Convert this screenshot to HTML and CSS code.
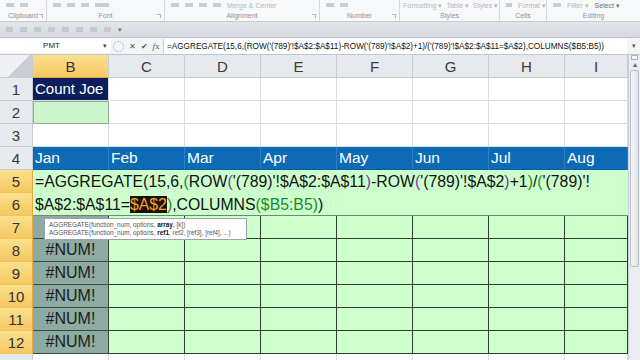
FILE: index.html
```html
<!DOCTYPE html>
<html lang="en">
<head>
  <meta charset="UTF-8" />
  <title>AGGREGATE - Count Joe</title>
  <link rel="stylesheet" href="styles.css">
</head>
<body>
  <div class="ribbon">
    <div class="group clip">
      <div class="icons"><span class="ic"></span><span class="ic"></span></div>
      <div class="label">Clipboard <i class="launch"></i></div>
    </div>
    <div class="group font">
      <div class="icons"><span class="ic"></span><span class="ic"></span><span class="ic"></span><span class="ic wide"></span></div>
      <div class="label">Font <i class="launch"></i></div>
    </div>
    <div class="group align">
      <div class="icons"><span class="ic"></span><span class="ic"></span><span class="ic"></span><span class="ic"></span><span class="top-text">Merge &amp; Center</span></div>
      <div class="label">Alignment <i class="launch"></i></div>
    </div>
    <div class="group number">
      <div class="icons"><span class="ic"></span><span class="ic"></span></div>
      <div class="label">Number <i class="launch"></i></div>
    </div>
    <div class="group styles">
      <div class="icons tight"><span class="top-text">Formatting ▾</span><span class="top-text">Table ▾</span><span class="top-text">Styles ▾</span></div>
      <div class="label">Styles</div>
    </div>
    <div class="group cells">
      <div class="icons"><span class="ic"></span><span class="top-text">Format ▾</span></div>
      <div class="label">Cells</div>
    </div>
    <div class="group editing">
      <div class="icons"><span class="ic"></span><span class="top-text">Filter ▾</span><span class="top-text dark">Select ▾</span></div>
      <div class="label">Editing</div>
    </div>
  </div>

  <div class="qat">
    <span class="qi"></span><span class="qi"></span><span class="qi"></span><span class="qi"></span><span class="qi"></span><span class="qi"></span><span class="qi"></span><span class="qi"></span>
    <span class="qarrow">▾</span>
  </div>

  <div class="formula-bar">
    <div class="name-box">PMT</div>
    <span class="nb-drop">▾</span>
    <span class="fb-grip"></span>
    <span class="fb-btn">✕</span>
    <span class="fb-btn">✔</span>
    <span class="fb-btn fx"><i>f</i>x</span>
    <div class="formula">=AGGREGATE(15,6,(ROW('(789)'!$A$2:$A$11)-ROW('(789)'!$A$2)+1)/('(789)'!$A$2:$A$11=$A$2),COLUMNS($B5:B5))</div>
    <span class="fb-expand">▾</span>
  </div>

  <div class="workspace">
    <div class="sheet">
      <div class="hd corner"></div>
      <div class="hd col sel">B</div>
      <div class="hd col">C</div>
      <div class="hd col">D</div>
      <div class="hd col">E</div>
      <div class="hd col">F</div>
      <div class="hd col">G</div>
      <div class="hd col">H</div>
      <div class="hd col">I</div>

      <div class="hd row">1</div>
      <div class="c navy">Count Joe</div>
      <div class="c"></div><div class="c"></div><div class="c"></div><div class="c"></div><div class="c"></div><div class="c"></div><div class="c"></div>

      <div class="hd row">2</div>
      <div class="c input"></div>
      <div class="c"></div><div class="c"></div><div class="c"></div><div class="c"></div><div class="c"></div><div class="c"></div><div class="c"></div>

      <div class="hd row">3</div>
      <div class="c"></div><div class="c"></div><div class="c"></div><div class="c"></div><div class="c"></div><div class="c"></div><div class="c"></div><div class="c"></div>

      <div class="hd row">4</div>
      <div class="c month">Jan</div>
      <div class="c month">Feb</div>
      <div class="c month">Mar</div>
      <div class="c month">Apr</div>
      <div class="c month">May</div>
      <div class="c month">Jun</div>
      <div class="c month">Jul</div>
      <div class="c month">Aug</div>

      <div class="hd row sel">5</div>
      <div class="editor">=AGGREGATE(15,6,<span class="p2">(</span>ROW<span class="p3">(</span>'(789)'!$A$2:$A$11<span class="p3">)</span>-ROW<span class="p3">(</span>'(789)'!$A$2<span class="p3">)</span>+1<span class="p2">)</span>/<span class="p2">(</span>'(789)'!<br>$A$2:$A$11=<span class="ref">$A$2</span><span class="p2">)</span>,COLUMNS<span class="p2">(</span><span class="p2">$B5:B5</span><span class="p2">)</span>)</div>
      <div class="hd row sel">6</div>

      <div class="hd row sel">7</div>
      <div class="c err"></div>
      <div class="c g"></div><div class="c g"></div><div class="c g"></div><div class="c g"></div><div class="c g"></div><div class="c g"></div><div class="c g"></div>

      <div class="hd row sel">8</div>
      <div class="c err">#NUM!</div>
      <div class="c g"></div><div class="c g"></div><div class="c g"></div><div class="c g"></div><div class="c g"></div><div class="c g"></div><div class="c g"></div>

      <div class="hd row sel">9</div>
      <div class="c err">#NUM!</div>
      <div class="c g"></div><div class="c g"></div><div class="c g"></div><div class="c g"></div><div class="c g"></div><div class="c g"></div><div class="c g"></div>

      <div class="hd row sel">10</div>
      <div class="c err">#NUM!</div>
      <div class="c g"></div><div class="c g"></div><div class="c g"></div><div class="c g"></div><div class="c g"></div><div class="c g"></div><div class="c g"></div>

      <div class="hd row sel">11</div>
      <div class="c err">#NUM!</div>
      <div class="c g"></div><div class="c g"></div><div class="c g"></div><div class="c g"></div><div class="c g"></div><div class="c g"></div><div class="c g"></div>

      <div class="hd row sel">12</div>
      <div class="c err">#NUM!</div>
      <div class="c g"></div><div class="c g"></div><div class="c g"></div><div class="c g"></div><div class="c g"></div><div class="c g"></div><div class="c g"></div>

      <div class="hd row">13</div>
      <div class="c"></div><div class="c"></div><div class="c"></div><div class="c"></div><div class="c"></div><div class="c"></div><div class="c"></div><div class="c"></div>

      <div class="tip">
        AGGREGATE(function_num, options, <b>array</b>, [k])<br>
        AGGREGATE(function_num, options, <b>ref1</b>, ref2, [ref3], [ref4], ...)
      </div>
    </div>

    <div class="vscroll">
      <div class="split"></div>
      <div class="arrow">▴</div>
      <div class="thumb"></div>
    </div>
  </div>
</body>
</html>
```

FILE: styles.css
```css
body {
  margin: 0;
  width: 640px;
  height: 360px;
  overflow: hidden;
  font-family: 'Liberation Sans', Arial, sans-serif;
  background-color: #ffffff;
}

/* ribbon */
.ribbon {
  height: 21px;
  display: flex;
  background-color: #f7f8fa;
  border-bottom: 1px solid #c6ccd4;
}

.group {
  display: flex;
  flex-direction: column;
  justify-content: space-between;
  border-right: 1px solid #d6dae0;
}

.group .icons {
  height: 10px;
  display: flex;
  align-items: center;
  gap: 6px;
  padding-left: 6px;
  overflow: hidden;
}

.group .icons.tight {
  gap: 4px;
  padding-left: 3px;
}

.ic {
  width: 8px;
  height: 4px;
  background-color: #c9ced6;
}

.ic.wide {
  width: 14px;
}

.top-text {
  font-size: 7px;
  line-height: 9px;
  color: #b3b9c2;
  white-space: nowrap;
}

.top-text.dark {
  color: #6c7582;
}

.group .label {
  position: relative;
  height: 10px;
  font-size: 7px;
  line-height: 9px;
  color: #8a94a2;
  text-align: center;
}

.launch {
  position: absolute;
  right: 3px;
  top: 3px;
  width: 3px;
  height: 3px;
  border-top: 1px solid #b0b7c1;
  border-right: 1px solid #b0b7c1;
}

.clip { width: 46px; }
.font { width: 117px; }
.align { width: 154px; }
.number { width: 79px; }
.styles { width: 99px; }
.cells { width: 46px; }
.editing { flex: 1; border-right: none; }

/* quick access */
.qat {
  height: 15px;
  display: flex;
  align-items: center;
  gap: 7px;
  padding-left: 6px;
  background: linear-gradient(#e2e6eb, #d5dae1);
  border-bottom: 1px solid #bcc3cc;
}

.qi {
  width: 7px;
  height: 5px;
  background-color: #c3c9d1;
}

.qarrow {
  font-size: 7px;
  color: #6d7784;
}

/* formula bar */
.formula-bar {
  height: 16px;
  display: flex;
  align-items: center;
  background-color: #f2f4f7;
  border-bottom: 1px solid #bfc6cf;
}

.name-box {
  width: 103px;
  height: 14px;
  background-color: #ffffff;
  font-size: 8px;
  line-height: 14px;
  text-align: center;
  color: #222;
}

.nb-drop {
  width: 8px;
  font-size: 7px;
  color: #444;
  background-color: #ffffff;
  height: 14px;
  line-height: 14px;
}

.fb-grip {
  width: 9px;
  height: 9px;
  margin: 0 2px 0 2px;
  border: 1px dotted #aab2bd;
  border-radius: 50%;
}

.fb-btn {
  width: 12px;
  font-size: 8px;
  color: #4b5563;
  text-align: center;
}

.fb-btn.fx {
  font-family: 'Liberation Serif', serif;
  font-size: 9px;
  color: #6a5a3a;
  margin-right: 1px;
}

.formula {
  flex: 1;
  height: 15px;
  background-color: #ffffff;
  border-left: 1px solid #c6ccd4;
  font-size: 8.2px;
  line-height: 15px;
  padding-left: 3px;
  color: #111;
  white-space: nowrap;
  overflow: hidden;
}

.fb-expand {
  width: 13px;
  font-size: 7px;
  color: #555;
  text-align: center;
}

/* sheet */
.workspace {
  display: flex;
}

.sheet {
  position: relative;
  display: grid;
  grid-template-columns: 33px repeat(7, 76px) 63px;
  grid-auto-rows: 23px;
}

.hd {
  background-color: #e6e9ee;
  border-right: 1px solid #c7cdd5;
  border-bottom: 1px solid #c7cdd5;
  color: #3b3b3b;
  font-size: 15px;
  display: flex;
  align-items: center;
  justify-content: center;
}

.hd.corner {
  background: linear-gradient(135deg, #eef0f3 55%, #c9ced5 56%);
}

.hd.sel {
  background: linear-gradient(#fbe08d, #f5c862);
  border-bottom-color: #e2a93a;
  color: #333;
}

.hd.row.sel {
  border-right: 1px solid #e2a93a;
  border-bottom-color: #f2c15c;
}

.c {
  border-right: 1px solid #dadde1;
  border-bottom: 1px solid #dadde1;
  font-size: 15px;
  line-height: 22px;
  padding-left: 2px;
  white-space: nowrap;
  overflow: hidden;
}

.navy {
  background-color: #0c1f5c;
  color: #ffffff;
}

.input {
  background-color: #ccf5cc;
  border: 1px solid #8fb08f;
}

.month {
  background-color: #0d6bb5;
  color: #ffffff;
  font-size: 15.5px;
  border-right-color: #2c7fc0;
  border-bottom-color: #0a5d9e;
}

.editor {
  grid-column: 2 / 10;
  grid-row: 6 / 8;
  background-color: #ccffcc;
  border-bottom: 1px solid #6c8a6c;
  font-size: 15.8px;
  line-height: 23px;
  padding-left: 2px;
  color: #111;
  white-space: nowrap;
}

.p2 { color: #1c8a2a; }
.p3 { color: #7a3a9a; }

.ref {
  background-color: #1b0f0a;
  color: #f0a628;
}

.err {
  background-color: #8eaba3;
  color: #1c1c1c;
  font-size: 16px;
  text-align: center;
  padding-left: 0;
  border-right: 1px solid #3a4a3a;
  border-bottom: 1px solid #3a4a3a;
}

.g {
  background-color: #ccffcc;
  border-right: 1px solid #2e3d2e;
  border-bottom: 1px solid #2e3d2e;
}

.tip {
  position: absolute;
  left: 44px;
  top: 163px;
  width: 193px;
  padding: 2px 4px;
  background-color: #ffffff;
  border: 1px solid #9aa2ad;
  font-size: 6.4px;
  line-height: 8px;
  color: #555;
  white-space: nowrap;
}

.tip b {
  color: #111;
}

/* scrollbar */
.vscroll {
  width: 12px;
  height: 307px;
  background-color: #e9ecf0;
  border-left: 1px solid #c9ced6;
}

.split {
  height: 3px;
  margin: 0 2px;
  border: 1px solid #aab2bd;
  background-color: #f2f4f6;
}

.arrow {
  font-size: 8px;
  line-height: 9px;
  text-align: center;
  color: #5a6470;
}

.thumb {
  height: 195px;
  margin: 1px 1px 0;
  background: linear-gradient(90deg, #f5f6f8, #dde1e6);
  border: 1px solid #b9c0c9;
  border-radius: 2px;
}
```
